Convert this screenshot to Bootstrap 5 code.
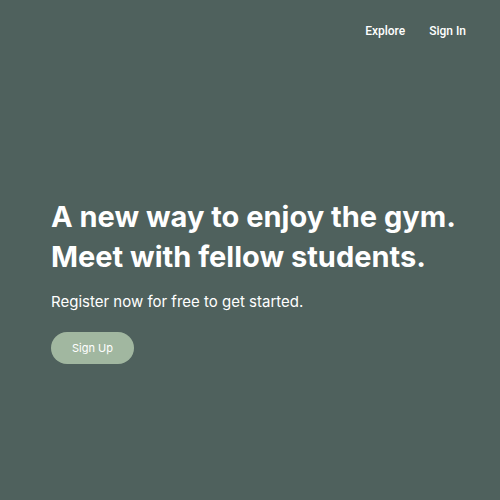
<!DOCTYPE html>
<html lang="en">
<head>
<meta charset="utf-8">
<meta name="viewport" content="width=device-width, initial-scale=1">
<title>Gym for students</title>
<link href="https://cdn.jsdelivr.net/npm/bootstrap@5.3.0/dist/css/bootstrap.min.css" rel="stylesheet">
<style>
body { background: #4f615d; color: #fff; font-family: Inter, "Liberation Sans", sans-serif; }
.site-header { padding: 21px 34px 19px; }
.site-nav { gap: 24px; }
.site-nav .nav-link { padding: 0; color: #fff; font-family: Roboto, sans-serif; font-size: 12px; font-weight: 500; line-height: 20px; }
.hero { padding: 137px 24px 32px 51px; }
.hero-title { font-size: 29px; line-height: 40px; font-weight: 700; margin-bottom: 13px; }
.hero-text { font-size: 15px; line-height: 24px; margin-bottom: 18px; }
.btn-signup { --bs-btn-color: #fff; --bs-btn-bg: #a1b7a0; --bs-btn-hover-color: #fff; --bs-btn-hover-bg: #90a88f; --bs-btn-border-width: 0; --bs-btn-padding-x: 21px; --bs-btn-padding-y: 8px; --bs-btn-font-size: 11px; --bs-btn-line-height: 16px; }
</style>
</head>
<body>
<header class="site-header">
  <nav class="nav site-nav justify-content-end" aria-label="Main">
    <a class="nav-link" href="#explore">Explore</a>
    <a class="nav-link" href="#signin">Sign In</a>
  </nav>
</header>
<main class="hero">
  <h1 class="hero-title">A new way to enjoy the gym.<br>Meet with fellow students.</h1>
  <p class="hero-text">Register now for free to get started.</p>
  <button type="button" class="btn btn-signup rounded-pill">Sign Up</button>
</main>
<script src="https://cdn.jsdelivr.net/npm/bootstrap@5.3.0/dist/js/bootstrap.bundle.min.js"></script>
</body>
</html>
